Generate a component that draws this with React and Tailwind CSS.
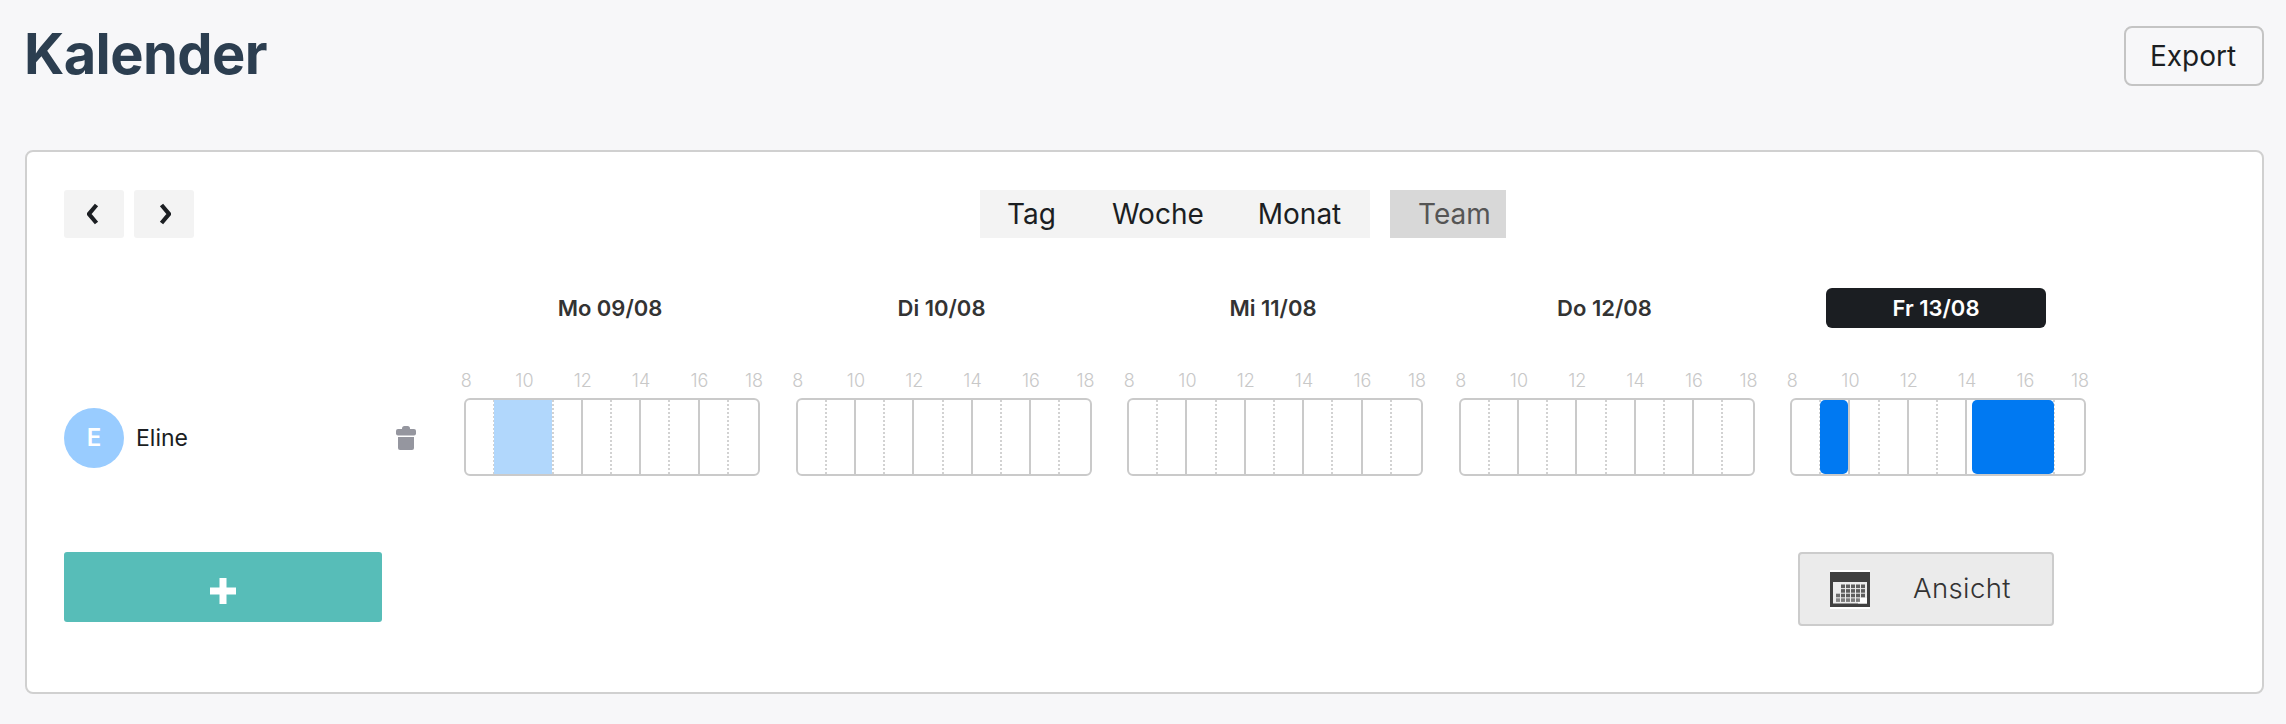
import React from 'react';

const hours = ['8', '10', '12', '14', '16', '18'];
const cells = [0, 1, 2, 3, 4, 5, 6, 7, 8, 9];

const days = [
  { label: 'Mo 09/08', events: [{ id: 1, className: 'left-[28px] w-[58px] bg-[#b1d7fc]' }] },
  { label: 'Di 10/08', events: [] },
  { label: 'Mi 11/08', events: [] },
  { label: 'Do 12/08', events: [] },
  {
    label: 'Fr 13/08',
    today: true,
    events: [
      { id: 2, className: 'left-[28px] w-[28px] rounded-[5px] bg-[#0079f2]' },
      { id: 3, className: 'left-[180px] w-[82px] rounded-[5px] bg-[#0079f2]' },
    ],
  },
];

const Chevron = ({ d }) => (
  <svg width="14" height="22" viewBox="0 0 14 22" fill="none">
    <path d={d} stroke="#1b1e22" strokeWidth="4.2" />
  </svg>
);

const TrashIcon = () => (
  <svg width="20" height="24" viewBox="0 0 20 24" fill="#95969f">
    <rect x="6" y="0" width="8" height="6" rx="2.5" />
    <rect x="0" y="3" width="20" height="6.5" rx="2" />
    <path d="M2 11h16v11a2 2 0 0 1-2 2H4a2 2 0 0 1-2-2z" />
  </svg>
);

const PlusIcon = () => (
  <svg width="26" height="26" viewBox="0 0 26 26" fill="#fff">
    <path d="M9.5 0h7v9.5H26v7h-9.5V26h-7v-9.5H0v-7h9.5z" />
  </svg>
);

const CalendarIcon = () => {
  const dots = [];
  [0, 1, 2, 3].forEach(r => {
    [0, 1, 2, 3, 4, 5].forEach(c => {
      if (r < 2 && c === 0) return;
      if (r === 3 && c > 4) return;
      dots.push(<rect key={`${r}-${c}`} x={6 + c * 5} y={14.5 + r * 4.6} width="4" height="3.6" fill={c === 0 ? '#666' : '#555'} opacity={r === 3 ? 0.75 : 0.95} />);
    });
  });
  return (
    <svg width="40" height="39" viewBox="0 0 40 39">
      <rect width="40" height="39" fill="#fff" />
      <rect x="0" y="2" width="40" height="35" fill="#404040" />
      <rect x="3" y="12" width="34" height="21.5" fill="#ececec" />
      <rect x="28" y="28" width="9" height="5.5" fill="#fff" />
      {dots}
    </svg>
  );
};

const DayStrip = ({ events }) => (
  <div className="relative flex h-[78px] w-[296px] overflow-hidden rounded-[6px] border-2 border-[#cacaca] bg-white">
    {cells.map(i => (
      <div
        key={i}
        className={`flex-1 border-r-2 ${i === 9 ? 'border-transparent' : i % 2 === 0 ? 'border-dotted border-[#d2d2d2]' : 'border-solid border-[#cacaca]'}`}
      />
    ))}
    {events.map(ev => (
      <div key={ev.id} className={`absolute top-0 bottom-0 ${ev.className}`} />
    ))}
  </div>
);

export default function App() {
  return (
    <div className="min-h-screen bg-[#f7f7f9] pl-[25px] pr-[22px] pt-[26px] font-['Inter',sans-serif] text-[#1b1e22]">
      <div className="flex h-[60px] items-start justify-between">
        <h1 className="-mt-[2px] -ml-[1px] text-[56px] leading-[60px] font-bold tracking-[-0.6px] text-[#2c3e50]">Kalender</h1>
        <button className="h-[60px] w-[140px] rounded-[8px] border-2 border-[#c4c4c4] pr-[2px] text-[28px] leading-none">Export</button>
      </div>

      <div className="mt-[64px] h-[544px] rounded-[8px] border-2 border-[#d0d0d0] bg-white pl-[37px] pr-[37px] pt-[38px]">
        <div className="flex items-center">
          <button className="flex h-[48px] w-[60px] items-center justify-center rounded-[3px] bg-[#f3f3f3]">
            <Chevron d="M9.5 2 2 11l7.5 9" />
          </button>
          <button className="ml-[10px] flex h-[48px] w-[60px] items-center justify-center rounded-[3px] bg-[#f3f3f3]">
            <Chevron d="m4.5 2 7.5 9-7.5 9" />
          </button>
          <div className="ml-[786px] flex h-[48px] w-[390px] items-center bg-[#f3f3f3] pl-[27px] text-[28px]">
            <span>Tag</span>
            <span className="ml-[56px]">Woche</span>
            <span className="ml-[54px]">Monat</span>
          </div>
          <div className="ml-[20px] flex h-[48px] w-[116px] items-center bg-[#d8d8d8] pl-[28px] text-[28px] text-[#555]">Team</div>
        </div>

        <div className="mt-[50px] flex">
          <div className="w-[400px]" />
          <div className="flex gap-[35.5px]">
            {days.map(day => (
              <div key={day.label} className="flex w-[296px] justify-center pr-[4px]">
                <div className={`flex h-[40px] w-[220px] items-center justify-center rounded-[6px] text-[22px] font-semibold ${day.today ? 'bg-[#1b1e22] text-white' : 'text-[#333]'}`}>
                  {day.label}
                </div>
              </div>
            ))}
          </div>
        </div>

        <div className="mt-[40px] flex">
          <div className="flex w-[400px] items-center pt-[32px]">
            <div className="flex h-[60px] w-[60px] items-center justify-center rounded-full bg-[#99ccff] text-[24px] font-semibold text-white">E</div>
            <span className="ml-[12px] text-[23px]">Eline</span>
            <div className="ml-auto mr-[48px] flex">
              <TrashIcon />
            </div>
          </div>
          <div className="flex gap-[35.5px]">
            {days.map(day => (
              <div key={day.label} className="w-[296px]">
                <div className="-ml-[27px] mb-[6px] flex h-[24px] items-center text-[18px] font-light text-[#c8c8c8]">
                  {hours.map(h => (
                    <span key={h} className={`shrink-0 text-center ${h === '18' ? 'w-[51px]' : 'w-[58.3px]'}`}>{h}</span>
                  ))}
                </div>
                <DayStrip events={day.events} />
              </div>
            ))}
          </div>
        </div>

        <div className="mt-[76px] flex items-start justify-between pr-[171px]">
          <button className="flex h-[70px] w-[318px] items-center justify-center rounded-[3px] bg-[#57bdb8] pt-[8px]">
            <PlusIcon />
          </button>
          <button className="flex h-[74px] w-[256px] items-center rounded-[4px] border-2 border-[#cccccc] bg-[#ebebeb] pl-[30px] text-[#333]">
            <CalendarIcon />
            <span className="ml-[43px] text-[27.5px] font-[350] tracking-[0.4px]">Ansicht</span>
          </button>
        </div>
      </div>
    </div>
  );
}
